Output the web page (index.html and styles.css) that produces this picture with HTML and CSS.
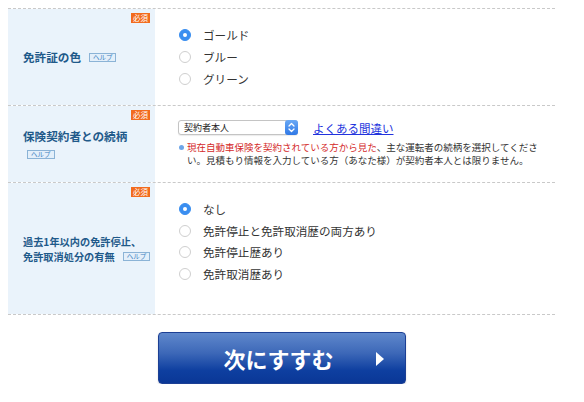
FILE: index.html
```html
<!DOCTYPE html>
<html lang="ja">
<head>
<meta charset="utf-8">
<title>フォーム</title>
<link rel="stylesheet" href="styles.css">
</head>
<body>
<div class="form">
  <div class="row r1">
    <div class="label">
      <span class="req">必須</span>
      <div class="label-text">免許証の色<span class="help">ヘルプ</span></div>
    </div>
    <div class="field">
      <ul class="radios">
        <li><span class="radio on"></span>ゴールド</li>
        <li><span class="radio"></span>ブルー</li>
        <li><span class="radio"></span>グリーン</li>
      </ul>
    </div>
  </div>
  <div class="row r2">
    <div class="label">
      <span class="req">必須</span>
      <div class="label-text">保険契約者との続柄<br><span class="help help-block">ヘルプ</span></div>
    </div>
    <div class="field">
      <div class="select-line">
        <div class="select">
          <span class="select-text">契約者本人</span>
          <span class="select-btn">
            <svg width="13" height="15" viewBox="0 0 13 15"><path d="M4 6 L6.5 3.5 L9 6 M4 9 L6.5 11.5 L9 9" fill="none" stroke="#fff" stroke-width="1.3" stroke-linecap="round" stroke-linejoin="round"/></svg>
          </span>
        </div>
        <a class="link" href="#">よくある間違い</a>
      </div>
      <p class="note"><span class="red">現在自動車保険を契約されている方から見た</span>、主な運転者の続柄を選択してください。見積もり情報を入力している方（あなた様）が契約者本人とは限りません。</p>
    </div>
  </div>
  <div class="row r3">
    <div class="label">
      <span class="req">必須</span>
      <div class="label-text small">過去1年以内の免許停止、<br>免許取消処分の有無<span class="help">ヘルプ</span></div>
    </div>
    <div class="field">
      <ul class="radios">
        <li><span class="radio on"></span>なし</li>
        <li><span class="radio"></span>免許停止と免許取消歴の両方あり</li>
        <li><span class="radio"></span>免許停止歴あり</li>
        <li><span class="radio"></span>免許取消歴あり</li>
      </ul>
    </div>
  </div>
</div>
<div class="actions">
  <button class="next" type="button"><span class="next-text">次にすすむ</span><span class="tri"></span></button>
</div>
</body>
</html>
```
FILE: styles.css
```css
* { box-sizing: border-box; }
body {
  margin: 8px;
  background: #fff;
  font-family: "Noto Sans CJK JP", "Noto Sans", sans-serif;
  color: #333;
}
.form {
  width: 547px;
  border-bottom: 1px dashed #c9c9c9;
}
.row {
  display: grid;
  grid-template-columns: 147px 1fr;
  border-top: 1px dashed #c9c9c9;
}
.label {
  position: relative;
  background: #eaf3fb;
  display: flex;
  align-items: center;
  padding-left: 15px;
}
.label-text {
  font-size: 11.6px;
  font-weight: bold;
  color: #1f5a8a;
  line-height: 16px;
}
.label-text.small {
  font-size: 10.2px;
  line-height: 15px;
}
.req {
  position: absolute;
  top: 4px;
  right: 5px;
  background: #f26b1d;
  color: #fff;
  font-size: 7.5px;
  line-height: 10px;
  padding: 0 2px;
  font-weight: normal;
}
.help {
  display: inline-block;
  margin-left: 8px;
  border: 1px solid #8bb3d6;
  background: #e3effa;
  color: #3f7fbf;
  font-size: 6.5px;
  line-height: 7px;
  padding: 0 3px;
  font-weight: normal;
  vertical-align: 2px;
}
.help-block {
  margin-left: 4px;
  vertical-align: 0;
}
.field {
  padding-left: 24px;
}
.r1 .field { padding-top: 15px; padding-bottom: 15px; }
.r2 .field { padding-top: 14px; padding-bottom: 15px; padding-left: 23px; }
.r3 .field { padding-top: 15px; padding-bottom: 29px; }
.radios {
  list-style: none;
  margin: 0;
  padding: 0;
}
.radios li {
  display: flex;
  align-items: center;
  height: 22px;
  font-size: 11.6px;
  color: #333;
}
.r3 .radios li { height: 21.8px; }
.radio {
  width: 12px;
  height: 12px;
  border-radius: 50%;
  border: 1px solid #cfcfcf;
  background: #fff;
  margin-right: 12px;
  flex: none;
  position: relative;
}
.radio.on {
  border-color: #3a8ef0;
  background: #3a8ef0;
}
.radio.on::after {
  content: "";
  position: absolute;
  left: 3px;
  top: 3px;
  width: 4px;
  height: 4px;
  border-radius: 50%;
  background: #fff;
}
.select-line {
  display: flex;
  align-items: center;
  height: 15px;
}
.select {
  width: 120px;
  height: 15px;
  display: flex;
  align-items: center;
  justify-content: space-between;
  border: 1px solid #c4c4c4;
  border-radius: 3px;
  background: #fff;
  box-shadow: 0 1px 1px rgba(0,0,0,0.08);
}
.select-text {
  font-size: 9px;
  padding-left: 5px;
  color: #222;
}
.select-btn {
  display: flex;
  width: 13px;
  height: 15px;
  margin: -1px -1px -1px 0;
  border-radius: 3px;
  background: linear-gradient(#6aa9f5, #2f78e6);
}
.link {
  margin-left: 15px;
  font-size: 11.5px;
  color: #2233dd;
  text-decoration: underline;
}
.note {
  position: relative;
  margin: 6px 0 0;
  padding-left: 9px;
  width: 365px;
  font-size: 9.5px;
  line-height: 13px;
  color: #333;
}
.note::before {
  content: "";
  position: absolute;
  left: 1px;
  top: 4px;
  width: 5px;
  height: 5px;
  border-radius: 50%;
  background: #6ea6e8;
}
.red { color: #d42a2a; }
.actions {
  width: 547px;
  display: flex;
  justify-content: center;
  padding-top: 17px;
}
.next {
  position: relative;
  width: 248px;
  height: 52px;
  border: 1px solid #1c3f94;
  border-radius: 4px;
  background: linear-gradient(#5f88cc 0%, #3d68b8 40%, #0e3fa0 75%, #0a3796 100%);
  color: #fff;
  font-family: "Noto Sans CJK JP", sans-serif;
  font-size: 22px;
  font-weight: bold;
  display: flex;
  align-items: center;
  justify-content: center;
  padding: 0;
  box-shadow: 0 1px 2px rgba(0,0,0,0.15);
}
.next-text {
  margin-left: -6px;
  letter-spacing: 0;
}
.tri {
  position: absolute;
  left: 217px;
  top: 19px;
  width: 0;
  height: 0;
  border-top: 7px solid transparent;
  border-bottom: 7px solid transparent;
  border-left: 8px solid #fff;
}
```
